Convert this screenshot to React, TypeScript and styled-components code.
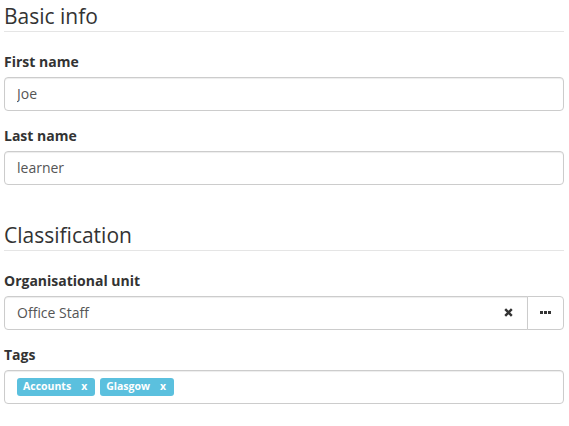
import React from "react";
import styled, { createGlobalStyle } from "styled-components";

const GlobalStyle = createGlobalStyle`
  body {
    margin: 0;
    background: #fff;
    font-family: "Open Sans", "Liberation Sans", sans-serif;
    font-size: 14px;
    line-height: 1.42857;
    color: #333;
  }
  * {
    box-sizing: border-box;
  }
`;

const Page = styled.div`
  width: 560px;
  margin-left: 4px;
  padding-top: 1px;
`;

const Fieldset = styled.fieldset<{ $spaced?: boolean }>`
  border: 0;
  margin: ${(p) => (p.$spaced ? "20px 0 0" : "0")};
  padding: 0;
  min-width: 0;
`;

const Legend = styled.div`
  font-size: 21px;
  line-height: 30px;
  color: #333;
  border-bottom: 1px solid #e5e5e5;
  margin-bottom: 20px;
`;

const FormGroup = styled.div`
  margin-bottom: 15px;
`;

const Label = styled.label`
  display: block;
  font-weight: 700;
  margin-bottom: 5px;
`;

const TextInput = styled.input`
  display: block;
  width: 100%;
  height: 34px;
  padding: 6px 12px;
  font-family: inherit;
  font-size: 14px;
  color: #555;
  background: #fff;
  border: 1px solid #ccc;
  border-radius: 4px;
  box-shadow: inset 0 1px 1px rgba(0, 0, 0, 0.075);
  outline: none;
`;

const InputGroup = styled.div`
  display: flex;
`;

const InputWrap = styled.div`
  position: relative;
  flex: 1;

  ${TextInput} {
    border-radius: 4px 0 0 4px;
  }
`;

const ClearButton = styled.button`
  position: absolute;
  top: 0;
  right: 15px;
  height: 34px;
  padding: 0;
  border: 0;
  background: none;
  display: flex;
  align-items: center;
`;

const AddonButton = styled.button`
  width: 37px;
  height: 34px;
  margin-left: -1px;
  padding: 0;
  border: 1px solid #ccc;
  border-radius: 0 4px 4px 0;
  background: #fff;
  display: flex;
  align-items: center;
  justify-content: center;
`;

const TagBox = styled.div`
  display: flex;
  align-items: center;
  gap: 5px;
  height: 34px;
  padding: 0 12px;
  border: 1px solid #ccc;
  border-radius: 4px;
  box-shadow: inset 0 1px 1px rgba(0, 0, 0, 0.075);
`;

const Tag = styled.span`
  display: inline-flex;
  align-items: center;
  height: 18px;
  padding: 0 6px;
  background: #5bc0de;
  color: #fff;
  font-size: 10.5px;
  font-weight: 700;
  border-radius: 3px;
`;

const TagRemove = styled.span`
  margin-left: 8px;
  padding: 0 2px;
`;

const TimesIcon = () => (
  <svg width="9" height="9" viewBox="0 0 9 9">
    <path d="M1.2 1.2 L7.8 7.8 M7.8 1.2 L1.2 7.8" stroke="#333" strokeWidth="2.4" strokeLinecap="butt" />
  </svg>
);

const EllipsisIcon = () => (
  <svg width="11" height="3" viewBox="0 0 11 3">
    <rect x="0" y="0" width="3" height="3" fill="#333" />
    <rect x="4" y="0" width="3" height="3" fill="#333" />
    <rect x="8" y="0" width="3" height="3" fill="#333" />
  </svg>
);

const tags = ["Accounts", "Glasgow"];

export default function App() {
  return (
    <Page>
      <GlobalStyle />
      <Fieldset>
        <Legend>Basic info</Legend>
        <FormGroup>
          <Label>First name</Label>
          <TextInput defaultValue="Joe" />
        </FormGroup>
        <FormGroup>
          <Label>Last name</Label>
          <TextInput defaultValue="learner" />
        </FormGroup>
      </Fieldset>
      <Fieldset $spaced>
        <Legend>Classification</Legend>
        <FormGroup>
          <Label>Organisational unit</Label>
          <InputGroup>
            <InputWrap>
              <TextInput defaultValue="Office Staff" />
              <ClearButton>
                <TimesIcon />
              </ClearButton>
            </InputWrap>
            <AddonButton>
              <EllipsisIcon />
            </AddonButton>
          </InputGroup>
        </FormGroup>
        <FormGroup>
          <Label>Tags</Label>
          <TagBox>
            {tags.map((t) => (
              <Tag key={t}>
                {t}
                <TagRemove>x</TagRemove>
              </Tag>
            ))}
          </TagBox>
        </FormGroup>
      </Fieldset>
    </Page>
  );
}
